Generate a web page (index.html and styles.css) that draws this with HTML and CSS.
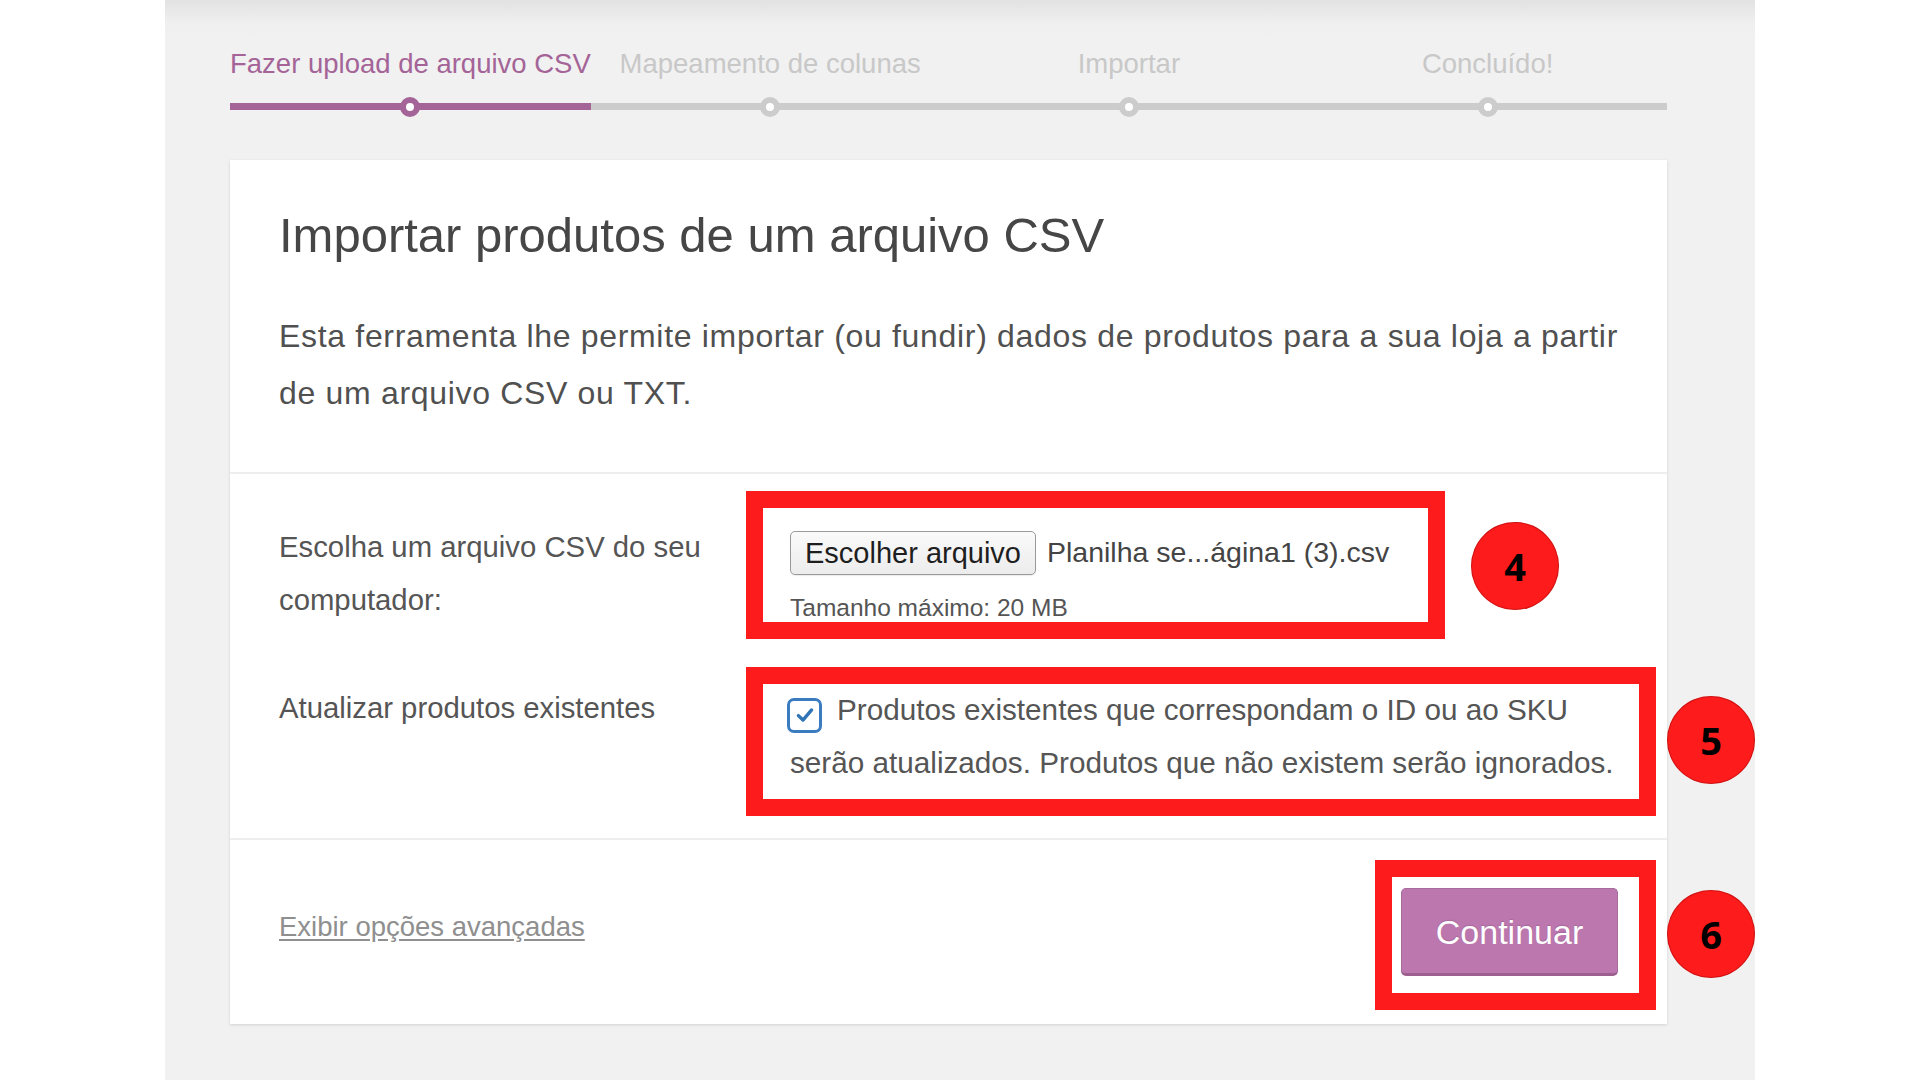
FILE: index.html
```html
<!DOCTYPE html>
<html lang="pt-BR">
<head>
<meta charset="utf-8">
<title>Importar produtos</title>
<link rel="stylesheet" href="styles.css">
</head>
<body>
<div class="panel">
  <ol class="steps">
    <li class="step active"><span class="step-label">Fazer upload de arquivo CSV</span><span class="step-bar"><span class="dot"></span></span></li>
    <li class="step"><span class="step-label">Mapeamento de colunas</span><span class="step-bar"><span class="dot"></span></span></li>
    <li class="step"><span class="step-label">Importar</span><span class="step-bar"><span class="dot"></span></span></li>
    <li class="step"><span class="step-label">Concluído!</span><span class="step-bar"><span class="dot"></span></span></li>
  </ol>

  <div class="card">
    <header class="card-head">
      <h2 class="title">Importar produtos de um arquivo CSV</h2>
      <p class="intro">Esta ferramenta lhe permite importar (ou fundir) dados de produtos para a sua loja a partir<br>de um arquivo CSV ou TXT.</p>
    </header>

    <section class="card-form">
      <div class="row">
        <div class="label">Escolha um arquivo CSV do seu<br>computador:</div>
        <div class="field">
          <div class="file-line">
            <span class="file-btn">Escolher arquivo</span>
            <span class="file-name">Planilha se...ágina1 (3).csv</span>
          </div>
          <div class="hint">Tamanho máximo: 20 MB</div>
          <span class="mark mark-1"></span>
          <span class="badge badge-4">4</span>
        </div>
      </div>
      <div class="row row-2">
        <div class="label">Atualizar produtos existentes</div>
        <div class="field">
          <p class="check-text"><span class="checkbox"><svg viewBox="0 0 20 20" width="24" height="24"><path d="M4.5 10.5 L8.3 14.2 L15.5 5.8" fill="none" stroke="#2f74b5" stroke-width="2.8" stroke-linecap="round" stroke-linejoin="round"/></svg></span>Produtos existentes que correspondam o ID ou ao SKU<br>serão atualizados. Produtos que não existem serão ignorados.</p>
          <span class="mark mark-2"></span>
          <span class="badge badge-5">5</span>
        </div>
      </div>
    </section>

    <footer class="card-foot">
      <a class="advanced" href="#">Exibir opções avançadas</a>
      <div class="btn-wrap">
        <span class="btn-primary">Continuar</span>
        <span class="mark mark-3"></span>
        <span class="badge badge-6">6</span>
      </div>
    </footer>
  </div>
</div>
</body>
</html>
```

FILE: styles.css
```css
html, body {
  margin: 0;
  padding: 0;
  background: #ffffff;
}

body {
  font-family: "Liberation Sans", Arial, sans-serif;
  color: #555;
}

.panel {
  width: 1590px;
  min-height: 1080px;
  margin-left: 165px;
  padding-left: 65px;
  box-sizing: border-box;
  background: linear-gradient(to bottom, #e2e2e2 0px, #efefef 22px, #f1f1f1 40px, #f1f1f1 100%);
}

/* Steps */
.steps {
  list-style: none;
  margin: 0;
  padding: 49px 0 0 0;
  width: 1437px;
  display: grid;
  grid-template-columns: repeat(4, 1fr);
}

.step {
  display: flex;
  flex-direction: column;
  align-items: stretch;
}

.step-label {
  display: block;
  text-align: center;
  font-size: 27.5px;
  line-height: 30px;
  color: #c8c8c8;
  white-space: nowrap;
}

.step.active .step-label {
  color: #a46497;
}

.step-bar {
  position: relative;
  display: block;
  height: 7px;
  margin-top: 24px;
  background: #cccccc;
}

.step.active .step-bar {
  background: #a46497;
}

.dot {
  position: absolute;
  left: 50%;
  top: 50%;
  width: 8px;
  height: 8px;
  margin: -10px 0 0 -10px;
  border: 6px solid #cccccc;
  border-radius: 50%;
  background: #ffffff;
}

.step.active .dot {
  border-color: #a46497;
}

/* Card */
.card {
  width: 1437px;
  margin-top: 50px;
  background: #ffffff;
  box-shadow: 0 1px 3px rgba(0, 0, 0, 0.13);
}

.card-head {
  padding: 46px 49px 50px 49px;
  border-bottom: 2px solid #eeeeee;
}

.title {
  margin: 0;
  font-size: 49px;
  line-height: 58px;
  font-weight: 400;
  color: #464646;
}

.intro {
  margin: 44px 0 0 0;
  font-size: 32px;
  line-height: 57px;
  letter-spacing: 0.68px;
  color: #505050;
  white-space: nowrap;
}

/* Form */
.card-form {
  padding: 46px 49px 49px 49px;
  border-bottom: 2px solid #eeeeee;
}

.row {
  display: grid;
  grid-template-columns: 511px 1fr;
}

.row-2 {
  margin-top: 55px;
}

.label {
  font-size: 29.3px;
  line-height: 53px;
  color: #555;
  white-space: nowrap;
}

.field {
  position: relative;
  font-size: 29.7px;
  line-height: 53px;
  color: #555;
}

.file-line {
  display: flex;
  align-items: center;
  height: 53px;
  margin-top: 6px;
}

.file-btn {
  display: inline-block;
  box-sizing: border-box;
  height: 44px;
  padding: 0 14px;
  line-height: 42px;
  font-size: 29px;
  color: #1e1e1e;
  border: 1px solid #9a9a9a;
  border-radius: 5px;
  background: linear-gradient(to bottom, #fafafa, #ececec);
  box-shadow: 0 1px 1px rgba(0, 0, 0, 0.08);
}

.file-name {
  margin-left: 11px;
  font-size: 28.5px;
  color: #444;
}

.hint {
  margin-top: 14px;
  font-size: 24.5px;
  line-height: 30px;
  color: #555;
}

.check-text {
  margin: 0;
  padding-top: 2px;
  white-space: nowrap;
}

.checkbox {
  display: inline-flex;
  align-items: center;
  justify-content: center;
  box-sizing: border-box;
  width: 35px;
  height: 35px;
  margin: 0 15px 0 -3px;
  vertical-align: -7px;
  border: 3px solid #3b7cc0;
  border-radius: 7px;
  background: #ffffff;
}

/* Footer */
.card-foot {
  display: flex;
  align-items: center;
  justify-content: space-between;
  padding: 48px 49px 48px 49px;
}

.advanced {
  margin-bottom: 10px;
  font-size: 27.5px;
  color: #8f8f8f;
  text-decoration: underline;
  text-underline-offset: 3px;
}

.btn-wrap {
  position: relative;
}

.btn-primary {
  display: block;
  box-sizing: border-box;
  width: 217px;
  height: 88px;
  line-height: 86px;
  text-align: center;
  font-size: 34px;
  color: #ffffff;
  background: #bb77ae;
  border: 1px solid #a86c9c;
  border-bottom: 3px solid #9c5f90;
  border-radius: 5px;
  text-shadow: 0 -1px 1px rgba(0, 0, 0, 0.12);
}

/* Annotations */
.mark {
  position: absolute;
  box-sizing: border-box;
  border: 17px solid #fe1b1b;
  pointer-events: none;
}

.mark-1 { left: -44px; top: -29px; width: 699px; height: 148px; }
.mark-2 { left: -44px; top: -14px; width: 910px; height: 149px; }
.mark-3 { left: -26px; top: -28px; width: 281px; height: 150px; }

.badge {
  position: absolute;
  width: 88px;
  height: 88px;
  border-radius: 50%;
  background: #fe1b1b;
  box-shadow: inset 0 0 0 1px rgba(120, 0, 0, 0.35);
  color: #000;
  font-family: "Open Sans", "Liberation Sans", sans-serif;
  font-weight: 700;
  font-size: 38px;
  line-height: 88px;
  text-align: center;
}

.badge-4 { left: 681px; top: 2px; }
.badge-5 { left: 877px; top: 15px; }
.badge-6 { left: 266px; top: 2px; }
```
